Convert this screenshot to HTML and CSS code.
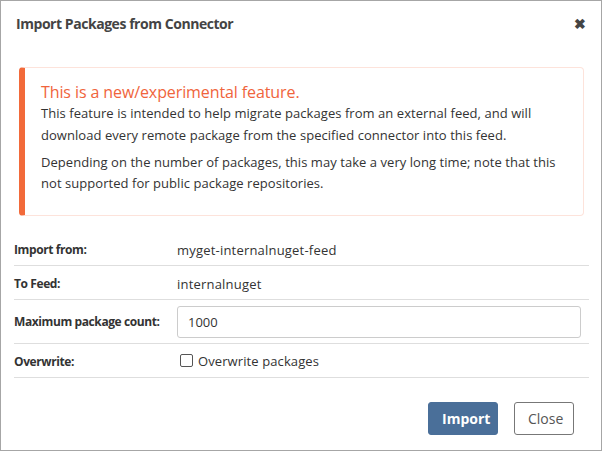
FILE: index.html
```html
<!DOCTYPE html>
<html>
<head>
<meta charset="utf-8">
<link rel="stylesheet" href="styles.css">
</head>
<body>
<div class="modal">
  <div class="header">
    <h1 class="title">Import Packages from Connector</h1>
    <span class="close-x">&#x2716;</span>
  </div>
  <div class="body">
    <div class="alert">
      <div class="alert-title">This is a new/experimental feature.</div>
      <p>This feature is intended to help migrate packages from an external feed, and will download every remote package from the specified connector into this feed.</p>
      <p>Depending on the number of packages, this may take a very long time; note that this not supported for public package repositories.</p>
    </div>
    <div class="form">
      <div class="row">
        <div class="label">Import from:</div>
        <div class="value">myget-internalnuget-feed</div>
      </div>
      <div class="row">
        <div class="label">To Feed:</div>
        <div class="value">internalnuget</div>
      </div>
      <div class="row row-input">
        <div class="label">Maximum package count:</div>
        <div class="value"><input class="text-input" type="text" value="1000"></div>
      </div>
      <div class="row">
        <div class="label">Overwrite:</div>
        <div class="value"><label class="check"><span class="box"></span>Overwrite packages</label></div>
      </div>
    </div>
  </div>
  <div class="footer">
    <button class="btn btn-primary">Import</button>
    <button class="btn btn-default">Close</button>
  </div>
</div>
</body>
</html>
```
FILE: styles.css
```css
html, body {
  margin: 0;
  padding: 0;
  background: #fff;
}
body {
  font-family: "Open Sans", "Noto Sans", sans-serif;
  color: #333;
}
.modal {
  box-sizing: border-box;
  width: 602px;
  height: 451px;
  border: 1px solid #a6a6a6;
  background: #fff;
  display: flex;
  flex-direction: column;
}
.header {
  display: flex;
  align-items: center;
  justify-content: space-between;
  padding: 11px 15px 0 15px;
  height: 22px;
}
.title {
  margin: 0;
  font-size: 14px;
  font-weight: 700;
  color: #444;
  letter-spacing: -0.45px;
}
.close-x {
  font-size: 14px;
  color: #444;
  font-weight: 700;
}
.body {
  padding: 33px 12px 0 13px;
}
.alert {
  margin: 0 5px 0 5px;
  border: 1px solid #fde3db;
  border-left: 6px solid #f26a3a;
  border-radius: 4px;
  padding: 13px 22px 20px 16px;
  font-size: 13px;
  line-height: 21.5px;
  color: #333;
}
.alert-title {
  font-size: 16px;
  color: #f0643c;
  line-height: 22px;
  letter-spacing: -0.1px;
}
.alert p {
  margin: 0 0 5.5px 0;
  letter-spacing: 0.05px;
}
.alert p:last-child {
  margin-bottom: 0;
}
.form {
  margin-top: 16px;
}
.row {
  display: flex;
  align-items: center;
  box-sizing: border-box;
  height: 34px;
  padding-top: 3px;
  border-bottom: 1px solid #dedede;
}
.row-input {
  height: 44px;
  padding-top: 1px;
}
.label {
  width: 163px;
  padding-left: 0;
  font-size: 12px;
  font-weight: 700;
  color: #333;
  letter-spacing: -0.4px;
}
.value {
  flex: 1;
  font-size: 13px;
  color: #333;
  letter-spacing: 0.2px;
  padding-right: 8px;
}
.text-input {
  box-sizing: border-box;
  width: 100%;
  height: 32px;
  border: 1px solid #ccc;
  border-radius: 3px;
  padding: 0 10px;
  font-family: inherit;
  font-size: 13px;
  color: #333;
  outline: none;
}
.check {
  display: inline-flex;
  align-items: center;
  gap: 5px;
  margin-left: 3px;
  letter-spacing: 0.1px;
}
.box {
  display: inline-block;
  width: 11px;
  height: 11px;
  border: 1px solid #555;
  border-radius: 2px;
  background: #fff;
}
.footer {
  margin-top: auto;
  display: flex;
  justify-content: flex-end;
  gap: 16px;
  padding: 0 27px 15px 0;
}
.btn {
  height: 33px;
  border-radius: 3px;
  font-family: inherit;
  font-size: 14px;
  padding: 0 13px;
  cursor: pointer;
}
.btn-primary {
  background: #4a6f99;
  border: 1px solid #4a6f99;
  color: #fff;
  font-weight: 700;
  width: 70px;
}
.btn-default {
  background: #fff;
  border: 1px solid #777;
  color: #555;
  width: 60px;
}
```
